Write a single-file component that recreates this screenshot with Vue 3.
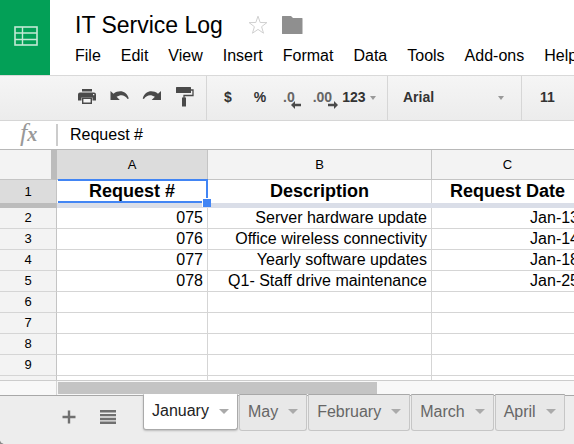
<script setup>
import { ref } from 'vue'

const menus = ['File', 'Edit', 'View', 'Insert', 'Format', 'Data', 'Tools', 'Add-ons', 'Help']
const columns = ['A', 'B', 'C']
const headings = ['Request #', 'Description', 'Request Date']
const rows = [
  ['075', 'Server hardware update', 'Jan-13'],
  ['076', 'Office wireless connectivity', 'Jan-14'],
  ['077', 'Yearly software updates', 'Jan-18'],
  ['078', 'Q1- Staff drive maintenance', 'Jan-25'],
  ['', '', ''],
  ['', '', ''],
  ['', '', ''],
  ['', '', ''],
]
const tabs = ['January', 'May', 'February', 'March', 'April']
const activeTab = ref('January')
const formula = ref('Request #')
</script>

<template>
  <div class="app">
    <header class="header">
      <a class="logo" href="#" aria-label="Sheets home">
        <svg width="24" height="20" viewBox="0 0 24 20" fill="none" stroke="#c3e9d5">
          <rect x="1" y="1" width="22" height="18" stroke-width="1.6" />
          <path d="M8.5 1v18M1 7h22M1 13.5h22" stroke-width="1.4" />
        </svg>
      </a>
      <div class="heading">
        <div class="title-row">
          <h1 class="title">IT Service Log</h1>
          <button class="plain" aria-label="Star">
            <svg width="20" height="20" viewBox="0 0 20 20" fill="none" stroke="#d0d0d0" stroke-width="1">
              <path d="M10 1.200l2.200 6.300 6.700.1-5.300 4.100 1.900 6.500-5.500-3.800-5.500 3.800 1.900-6.500L1.100 7.600l6.700-.1z" />
            </svg>
          </button>
          <button class="plain" aria-label="Move to folder">
            <svg width="22" height="20" viewBox="0 0 22 20" fill="#8f8f8f">
              <path d="M1.500 1h8.500l2 2h9q.5 0 .5.500v15q0 .5-.5.500H1.500q-.5 0-.5-.5v-17q0-.5.5-.5z" />
            </svg>
          </button>
        </div>
        <nav class="menus">
          <button v-for="m in menus" :key="m" class="plain menu">{{ m }}</button>
        </nav>
      </div>
    </header>

    <div class="toolbar">
      <div class="group history">
        <button class="plain" aria-label="Print">
          <svg width="20" height="20" viewBox="0 0 20 20" fill="#4a4a4a">
            <path d="M5 2h10v2.500H5z" />
            <path d="M3 5.500h14q2 0 2 2v6h-3.500v-3h-11v3H1v-6q0-2 2-2zM16 7v1.300h1.300V7z" fill-rule="evenodd" />
            <path d="M5.700 11.200h8.600v5.100H5.700z" fill="#f4f4f4" stroke="#4a4a4a" stroke-width="1.400" />
          </svg>
        </button>
        <button class="plain" aria-label="Undo">
          <svg width="20" height="20" viewBox="0 0 20 20" fill="#4a4a4a">
            <path d="M1.500 4l3 2.700C10 2.700 17.500 3.500 19.800 11.500l-1.200.4C15.500 7.500 11.500 7.300 7.600 9.800l3.200 3.200H1.500z" />
          </svg>
        </button>
        <button class="plain" aria-label="Redo">
          <svg width="20" height="20" viewBox="0 0 20 20" fill="#4a4a4a">
            <path d="M20 4l-3 2.700C11.500 2.700 4 3.500 1.700 11.500l1.200.4C6 7.500 10 7.300 13.900 9.800L10.700 13H20z" />
          </svg>
        </button>
        <button class="plain" aria-label="Paint format">
          <svg width="22" height="20" viewBox="0 0 22 20" fill="#4a4a4a">
            <path d="M3.500 0h14q.5 0 .5.500v5q0 .5-.5.500h-14q-.5 0-.5-.5v-5q0-.5.5-.5z" />
            <path d="M18 3h2v5.500h-9V12" fill="none" stroke="#4a4a4a" stroke-width="1.300" />
            <path d="M9 10.500h4v9H9z" />
          </svg>
        </button>
      </div>
      <div class="group numbers">
        <button class="plain tool symbol">$</button>
        <button class="plain tool symbol">%</button>
        <button class="plain tool decimal" aria-label="Decrease decimal places">
          .0
          <svg class="arrow" width="10" height="8" viewBox="0 0 10 8" fill="#4a4a4a">
            <path d="M0 4l4-4v2.800h6v2.400H4V8z" />
          </svg>
        </button>
        <button class="plain tool decimal" aria-label="Increase decimal places">
          .00
          <svg class="arrow" width="10" height="8" viewBox="0 0 10 8" fill="#4a4a4a">
            <path d="M10 4L6 0v2.800H0v2.400h6V8z" />
          </svg>
        </button>
        <button class="plain tool more">123<span class="caret small"></span></button>
      </div>
      <div class="group font">
        <button class="plain tool picker">Arial<span class="caret small"></span></button>
      </div>
      <div class="group size">
        <button class="plain tool">11</button>
      </div>
    </div>

    <div class="formula">
      <label class="fx" for="formula"><span class="f">f</span>x</label>
      <input id="formula" v-model="formula" class="formula-input" type="text" />
    </div>

    <main class="sheet">
      <table class="grid">
        <colgroup>
          <col class="col-num" />
          <col class="col-a" />
          <col class="col-b" />
          <col class="col-c" />
        </colgroup>
        <thead>
          <tr class="letters">
            <td class="corner"></td>
            <th v-for="c in columns" :key="c" scope="col" :class="{ selected: c === 'A' }">{{ c }}</th>
          </tr>
        </thead>
        <tbody>
          <tr class="first">
            <th class="num selected" scope="row">1</th>
            <td v-for="(h, i) in headings" :key="h" :class="{ active: i === 0 }">
              {{ h }}
              <template v-if="i === 0">
                <span class="outline"></span>
                <span class="handle"></span>
              </template>
            </td>
          </tr>
          <tr class="freeze">
            <td class="freeze-num"></td>
            <td colspan="3"></td>
          </tr>
          <tr v-for="(r, i) in rows" :key="i" class="row">
            <th class="num" scope="row">{{ i + 2 }}</th>
            <td v-for="(v, j) in r" :key="j">{{ v }}</td>
          </tr>
          <tr class="row">
            <th class="num"></th>
            <td></td>
            <td></td>
            <td></td>
          </tr>
        </tbody>
      </table>
    </main>

    <div class="scroll">
      <div class="scroll-gutter"></div>
      <div class="scroll-track"><div class="thumb"></div></div>
    </div>

    <footer class="footer">
      <button class="plain" aria-label="Add sheet">
        <svg width="14" height="14" viewBox="0 0 14 14" stroke="#707070" stroke-width="2.400">
          <path d="M7 .5v13M.5 7h13" />
        </svg>
      </button>
      <button class="plain" aria-label="All sheets">
        <svg width="16" height="14" viewBox="0 0 16 14" fill="#707070">
          <path d="M0 0h16v2.400H0zM0 3.900h16v2.400H0zM0 7.800h16v2.400H0zM0 11.600h16V14H0z" />
        </svg>
      </button>
      <div class="tabs">
        <button
          v-for="t in tabs"
          :key="t"
          class="tab"
          :class="{ current: t === activeTab }"
          @click="activeTab = t"
        >
          {{ t }}<span class="caret"></span>
        </button>
      </div>
    </footer>
  </div>
</template>

<style>
body {
  background: #8a8a8a;
}
</style>

<style scoped>
* {
  box-sizing: border-box;
}
.app {
  display: flex;
  flex-direction: column;
  height: 100vh;
  overflow: hidden;
  background: #fff;
  color: #000;
  font-family: 'Liberation Sans', Arial, sans-serif;
  font-size: 16px;
  border-bottom-left-radius: 5px;
}
.plain {
  flex: none;
  padding: 0;
  border: 0;
  background: none;
  color: inherit;
  font: inherit;
  white-space: nowrap;
}
svg {
  display: block;
}
.header {
  display: flex;
  flex: none;
  height: 75px;
}
.logo {
  display: flex;
  flex: none;
  align-items: center;
  justify-content: center;
  width: 50px;
  padding: 0 0 3px 2px;
  background: #03a057;
}
.heading {
  padding: 12px 0 0 25px;
}
.title-row {
  display: flex;
  align-items: center;
  height: 26px;
}
.title {
  margin: 0 25px 0 0;
  font-size: 23px;
  font-weight: 400;
  line-height: 26px;
  white-space: nowrap;
}
.title-row .plain {
  margin-right: 13px;
}
.menus {
  display: flex;
  gap: 20px;
  padding-top: 8px;
}
.menu {
  line-height: 20px;
}
.toolbar {
  display: flex;
  flex: none;
  height: 46px;
  border-top: 1px solid #d9d9d9;
  border-bottom: 1px solid #d6d6d6;
  background: linear-gradient(#f5f5f5, #ececec);
}
.group {
  display: flex;
  flex: none;
  align-items: center;
  padding-bottom: 3px;
  border-right: 1px solid #d6d6d6;
}
.history {
  gap: 12px;
  padding-left: 77px;
  padding-right: 11px;
}
.tool {
  color: #333;
  font-size: 14px;
  font-weight: 700;
}
.symbol {
  width: 32px;
}
.numbers {
  width: 181px;
  padding-left: 5px;
}
.decimal {
  position: relative;
  margin-left: 7px;
  margin-right: 11px;
  color: #666;
}
.decimal + .decimal {
  margin-right: 10px;
}
.arrow {
  position: absolute;
  right: -6px;
  bottom: -4px;
}
.more {
  display: flex;
  align-items: center;
  gap: 4px;
}
.font {
  width: 134px;
  padding-left: 15px;
  padding-right: 17px;
}
.picker {
  display: flex;
  flex: 1;
  align-items: center;
  justify-content: space-between;
}
.size {
  flex: 1;
  padding-left: 18px;
  border-right: 0;
}
.caret {
  border: 5px solid transparent;
  border-top-color: #aaa;
  border-bottom: 0;
}
.caret.small {
  margin-top: 3px;
  border-width: 4px 3px 0;
  border-top-color: #999;
}
.formula {
  display: flex;
  flex: none;
  align-items: center;
  height: 29px;
  border-bottom: 1px solid #b8b8b8;
}
.fx {
  width: 56px;
  padding: 0 0 4px 20px;
  color: #999;
  font-family: 'Liberation Serif', serif;
  font-size: 20px;
  font-style: italic;
  font-weight: 700;
  line-height: 24px;
}
.f {
  font-size: 26px;
  font-weight: 400;
}
.formula-input {
  flex: 1;
  min-width: 0;
  height: 22px;
  padding: 0 0 0 12px;
  border: 0;
  border-left: 2px solid #ccc;
  outline: 0;
  color: #000;
  font: inherit;
}
.sheet {
  flex: 1;
  min-height: 0;
  overflow: hidden;
  border-bottom: 1px solid #ccc;
}
.grid {
  width: 584px;
  border-spacing: 0;
  table-layout: fixed;
}
.col-num {
  width: 57px;
}
.col-a {
  width: 151px;
}
.col-b {
  width: 224px;
}
.col-c {
  width: 152px;
}
.grid th,
.grid td {
  overflow: hidden;
  padding: 0;
  border-right: 1px solid #d5d5d5;
  white-space: nowrap;
}
.grid th {
  background: #f3f3f3;
  border-color: #c4c4c4;
  font-size: 13px;
  font-weight: 400;
}
.grid th.selected {
  background: #dcdcdc;
}
.letters th {
  height: 30px;
  border-bottom: 1px solid #c4c4c4;
}
.grid .corner {
  border-right: 6px solid #bcbcbc;
  border-bottom: 1px solid #c4c4c4;
  background: #f3f3f3;
}
.first td {
  height: 23px;
  font-size: 18px;
  font-weight: 700;
  line-height: 23px;
  text-align: center;
}
.grid .active {
  position: relative;
  overflow: visible;
}
.outline {
  position: absolute;
  inset: -1px -1px 0 1px;
  border: 2px solid #4285f4;
  border-left: 0;
}
.handle {
  position: absolute;
  right: -4px;
  bottom: -4px;
  width: 9px;
  height: 9px;
  border: 1px solid #fff;
  border-right: 0;
  border-bottom: 0;
  background: #4285f4;
}
.grid .freeze td {
  height: 5px;
  border: 0;
  background: #dadee8;
}
.grid .freeze .freeze-num {
  background: #bcbcbc;
}
.row th,
.row td {
  height: 21px;
  border-bottom: 1px solid #d5d5d5;
  line-height: 20px;
}
.grid .row td {
  padding-right: 4px;
  text-align: right;
}
.scroll {
  display: flex;
  flex: none;
  height: 14px;
  background: #f8f8f8;
}
.scroll-gutter {
  width: 57px;
  border-right: 1px solid #d5d5d5;
}
.scroll-track {
  flex: 1;
  padding: 1px;
}
.thumb {
  width: 62%;
  height: 12px;
  background: #c4c4c4;
}
.footer {
  display: flex;
  flex: none;
  align-items: center;
  gap: 24px;
  height: 49px;
  padding: 0 0 6px 62px;
  border-top: 1px solid #a8a8a8;
  background: #ededed;
}
.tabs {
  display: flex;
  gap: 1px;
  align-self: flex-start;
  margin: -2px 0 0 3px;
}
.tab {
  display: flex;
  align-items: center;
  gap: 10px;
  height: 37px;
  padding: 0 8px 2px;
  border: 1px solid #c6c6c6;
  border-top-color: #a8a8a8;
  border-radius: 0 0 3px 3px;
  background: #e8e8e8;
  color: #666;
  font: inherit;
}
.tab.current {
  height: 36px;
  border-color: #aaa;
  border-top-color: #fff;
  background: #fff;
  box-shadow: 0 1px 2px #bbb;
  color: #222;
}
</style>
